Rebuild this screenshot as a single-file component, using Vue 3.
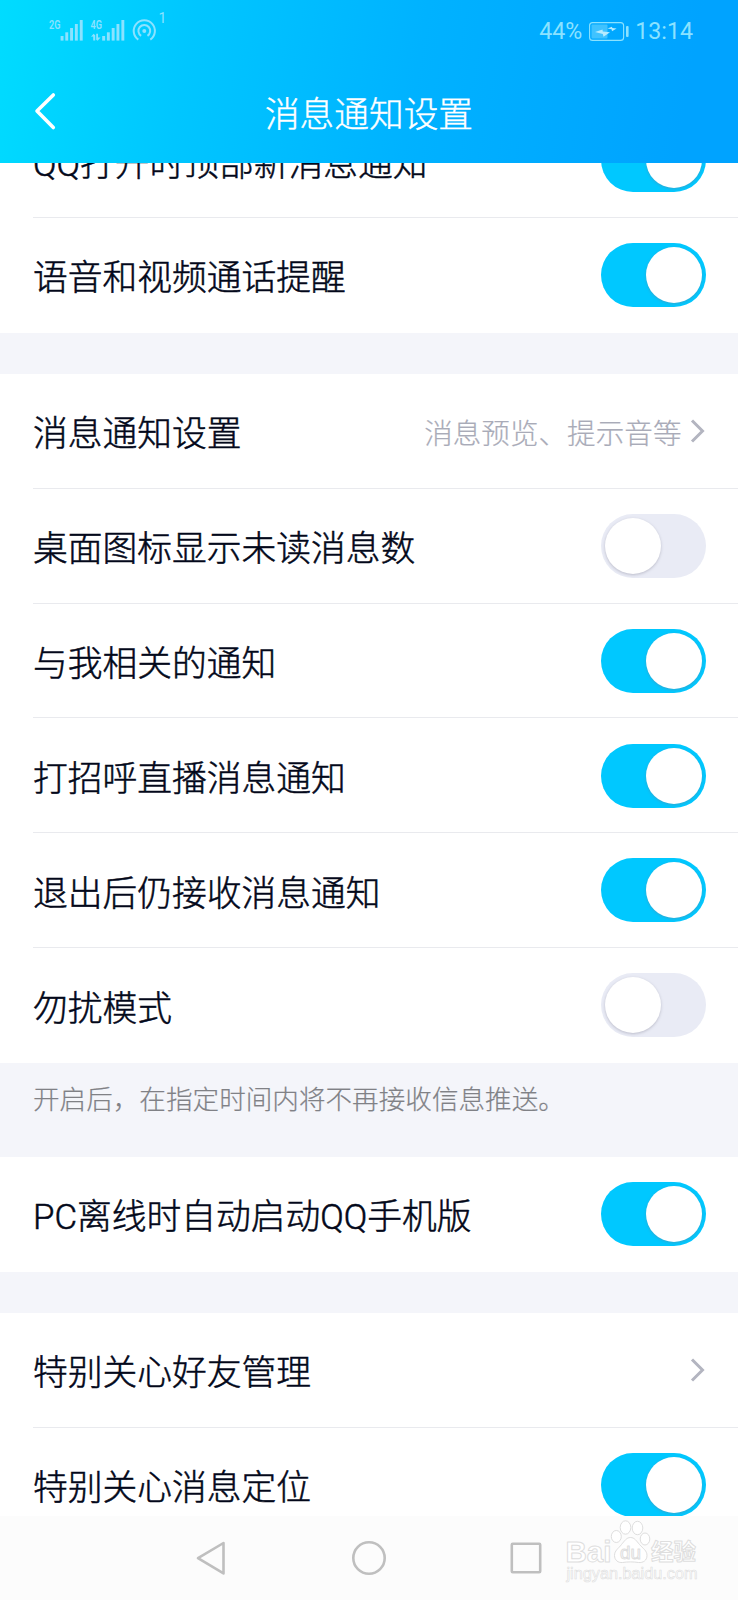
<template>
  <div class="phone">
    <header class="header">
      <div class="status-bar">
        <svg class="signals" width="120" height="36" viewBox="48 8 120 36">
          <g fill="currentColor">
            <text x="49" y="28.6" font-size="12.5" textLength="11.5" lengthAdjust="spacingAndGlyphs">2G</text>
            <text x="90.5" y="28.6" font-size="12.5" textLength="11.5" lengthAdjust="spacingAndGlyphs">4G</text>
            <text class="thin" x="158.5" y="22.6" font-size="14">1</text>
            <rect v-for="(bar, i) in bars" :key="'a' + i" :x="60.6 + bar.x" :y="bar.y" width="2.9" :height="40.6 - bar.y" />
            <rect v-for="(bar, i) in bars" :key="'b' + i" :x="102.2 + bar.x" :y="bar.y" width="2.9" :height="40.6 - bar.y" />
            <path d="M91 36.8l2.6-3 1.6 1.4v5.4h-2v-4zM96.2 33.8h1.8v3.6l2.6.1-3 3.2-1.4-1z" />
            <circle cx="144.3" cy="31" r="2" />
          </g>
          <g fill="none" stroke="currentColor" stroke-width="2">
            <path d="M138.3 39.6a10.6 10.6 0 1 1 12 0" />
            <path d="M141.1 35.8a5.9 5.9 0 1 1 6.4 0" />
          </g>
        </svg>
        <div class="status-right">
          <span>44%</span>
          <svg width="41" height="21" viewBox="588 20 41 21">
            <rect x="589.6" y="21.6" width="34" height="17.8" rx="3" fill="none" stroke="currentColor" stroke-width="1.1" />
            <rect x="591.5" y="23.5" width="16" height="14" rx="1" fill="currentColor" opacity=".45" />
            <rect x="626" y="25" width="2.6" height="11" rx="1" fill="currentColor" />
            <path
              d="M595 31l7.5-2.5.3 2 7.2.7-6.5 4.5-.7-2.7zM607.5 27.5l4.5-1.8.3 1.3 4.3.4-4.6 2.8-.4-1.9z"
              fill="#b5ebff"
            />
          </svg>
          <span>13:14</span>
        </div>
      </div>
      <div class="title-bar">
        <svg class="back" width="24" height="40" viewBox="34 91 24 40">
          <path
            d="M53.3 95L37 111l16.3 16.5"
            fill="none"
            stroke="#fff"
            stroke-width="3.6"
            stroke-linecap="round"
            stroke-linejoin="round"
          />
        </svg>
        <h1>消息通知设置</h1>
      </div>
    </header>

    <main class="content">
      <template v-for="(group, g) in groups" :key="g">
        <section class="group">
          <div v-for="item in group.items" :key="item.label" class="row">
            <span class="label">{{ item.label }}</span>
            <button
              v-if="item.type === 'switch'"
              class="switch"
              :class="{ on: item.value }"
              @click="item.value = !item.value"
            >
              <span class="knob"></span>
            </button>
            <div v-else class="link">
              <span v-if="item.hint">{{ item.hint }}</span>
              <svg width="16" height="26" viewBox="0 0 16 26">
                <path d="M2 2.5L12.5 13 2 23.5" fill="none" stroke="#b3b5c0" stroke-width="3" />
              </svg>
            </div>
          </div>
        </section>
        <p v-if="group.note" class="note">{{ group.note }}</p>
      </template>
    </main>

    <nav class="nav-bar">
      <svg width="40" height="40" viewBox="0 0 40 40">
        <path d="M6 20.2L31.5 5v30.4z" />
      </svg>
      <svg width="40" height="40" viewBox="0 0 40 40">
        <circle cx="20" cy="20" r="15.7" />
      </svg>
      <svg width="40" height="40" viewBox="0 0 40 40">
        <rect x="5.8" y="5.8" width="28.4" height="28.4" rx="1" />
      </svg>
      <svg class="watermark" width="150" height="72" viewBox="560 1515 150 72">
        <text class="bold" x="565.5" y="1561.5" font-size="30" textLength="46" lengthAdjust="spacingAndGlyphs">Bai</text>
        <ellipse cx="616.3" cy="1536.5" rx="5" ry="6" />
        <ellipse cx="625.5" cy="1527.5" rx="5.3" ry="6.7" />
        <ellipse cx="637.5" cy="1528" rx="5.3" ry="6.7" />
        <ellipse cx="645" cy="1539" rx="4.8" ry="6" />
        <path
          d="M630.5 1537.5c4 0 6 3.5 9 7 3.5 4 7.5 6 7.5 11 0 5-4 7.5-8.5 7-5-.8-11-.8-16 0-4.5.5-8-2.5-8-7 0-5 4-7 7-11 3-3.5 5-7 9-7z"
        />
        <text x="620" y="1558.5" font-size="19" textLength="21" lengthAdjust="spacingAndGlyphs">du</text>
        <text class="bold" x="651" y="1560" font-size="22.5">经验</text>
        <text class="url" x="566.5" y="1579" font-size="16" textLength="131" lengthAdjust="spacingAndGlyphs">jingyan.baidu.com</text>
      </svg>
    </nav>
  </div>
</template>

<script setup>
import { ref } from "vue";

const bars = [
  { x: 0, y: 36 },
  { x: 4.7, y: 32.3 },
  { x: 9.5, y: 28 },
  { x: 14.3, y: 24 },
  { x: 19.2, y: 20 },
];

const groups = ref([
  {
    items: [
      { label: "QQ打开时顶部新消息通知", type: "switch", value: true },
      { label: "语音和视频通话提醒", type: "switch", value: true },
    ],
  },
  {
    items: [
      { label: "消息通知设置", type: "link", hint: "消息预览、提示音等" },
      { label: "桌面图标显示未读消息数", type: "switch", value: false },
      { label: "与我相关的通知", type: "switch", value: true },
      { label: "打招呼直播消息通知", type: "switch", value: true },
      { label: "退出后仍接收消息通知", type: "switch", value: true },
      { label: "勿扰模式", type: "switch", value: false },
    ],
    note: "开启后，在指定时间内将不再接收信息推送。",
  },
  {
    items: [{ label: "PC离线时自动启动QQ手机版", type: "switch", value: true }],
  },
  {
    items: [
      { label: "特别关心好友管理", type: "link" },
      { label: "特别关心消息定位", type: "switch", value: true },
    ],
  },
]);
</script>

<style>
body {
  margin: 0;
}
</style>

<style scoped>
.phone {
  width: 738px;
  height: 1600px;
  display: flex;
  flex-direction: column;
  overflow: hidden;
  background: #f4f5fa;
  font-family: Roboto, "Noto Sans CJK SC", sans-serif;
  color: #03081a;
}

.header {
  position: relative;
  z-index: 1;
  flex: none;
  height: 163px;
  background: linear-gradient(100deg, #00dcff 0%, #00c6ff 26%, #00b2ff 56%, #00a3ff 92%);
  color: #fff;
}

.status-bar {
  display: flex;
  justify-content: space-between;
  height: 60px;
  padding: 0 45px 0 48px;
  box-sizing: border-box;
  color: #8be2ff;
}

.signals {
  margin-top: 8px;
  font-weight: 600;
}

.thin {
  font-weight: 400;
}

.status-right {
  display: flex;
  align-items: center;
  gap: 6px;
  height: 62px;
  font-size: 23.2px;
}

.title-bar {
  display: flex;
  align-items: center;
  height: 103px;
  padding: 0 34px;
}

.back {
  margin-top: -1px;
}

h1 {
  flex: 1;
  margin: 0 24px 0 0;
  font-size: 34.7px;
  font-weight: 300;
  text-align: center;
  -webkit-text-stroke: 0.4px currentColor;
}

.content {
  flex: 1;
  min-height: 0;
  margin-top: -59.8px;
  overflow: hidden;
}

.group {
  margin-bottom: 41px;
  background: #fff;
}

.row {
  display: flex;
  align-items: center;
  justify-content: space-between;
  height: 114.85px;
  margin-left: 33px;
  padding-right: 32.5px;
  box-sizing: border-box;
  border-bottom: 1px solid #e9eaee;
}

.row:last-child {
  border-bottom-color: #fff;
}

.label {
  margin-top: 1px;
  font-size: 34.75px;
  font-weight: 300;
  white-space: nowrap;
  -webkit-text-stroke: 0.5px currentColor;
}

.link {
  display: flex;
  align-items: center;
  gap: 8px;
  margin-top: 1px;
  font-size: 28.6px;
  font-weight: 300;
  color: #a9abb8;
  -webkit-text-stroke: 0.2px currentColor;
}

.switch {
  display: flex;
  flex: none;
  width: 104.5px;
  height: 64px;
  margin-top: 0.5px;
  padding: 4px;
  border: none;
  border-radius: 32px;
  background: #e9ebf5;
}

.switch.on {
  justify-content: flex-end;
  background: #00c8ff;
}

.knob {
  width: 56px;
  height: 56px;
  border-radius: 50%;
  background: #fff;
  box-shadow: 0 1px 3px rgba(120, 120, 140, 0.4);
}

.note {
  height: 94px;
  margin: -41px 0 0;
  padding: 17px 33px 0;
  box-sizing: border-box;
  font-size: 26.6px;
  font-weight: 300;
  line-height: 40px;
  color: #808186;
  -webkit-text-stroke: 0.2px currentColor;
}

.nav-bar {
  position: relative;
  display: flex;
  flex: none;
  justify-content: space-between;
  height: 84px;
  padding: 22px 192px;
  box-sizing: border-box;
  background: #fcfcfc;
  fill: none;
  stroke: #bfbfbf;
  stroke-width: 2.6;
  stroke-linejoin: round;
}

.watermark {
  position: absolute;
  left: 560px;
  top: -1px;
  fill: #fff;
  stroke: #dedede;
  stroke-width: 1;
}

.watermark text {
  font-family: "Liberation Sans", "Noto Sans CJK SC", sans-serif;
}

.watermark .url {
  stroke-width: 0.6;
}

.bold {
  font-weight: 700;
}
</style>
